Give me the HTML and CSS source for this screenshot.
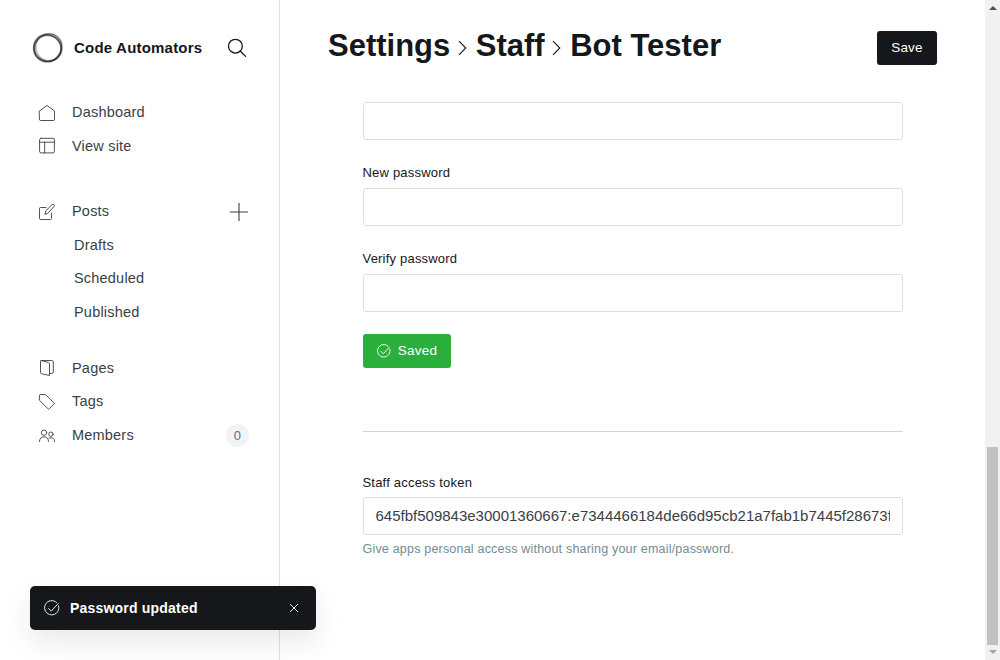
FILE: index.html
```html
<!DOCTYPE html>
<html lang="en">
<head>
<meta charset="utf-8">
<title>Settings - Staff - Bot Tester</title>
<link rel="stylesheet" href="styles.css">
</head>
<body>
<div class="app">
  <nav class="sidebar">
    <header class="site">
      <svg class="logo" viewBox="0 0 32 32"><g fill="none" stroke="#15171a"><ellipse cx="15.400" cy="16.400" rx="13.800" ry="13.400" stroke-width="1.500" opacity=".5"/><ellipse cx="16.3" cy="15.8" rx="14.5" ry="12.800" stroke-width=".9" opacity=".5" transform="rotate(-50 16 16)"/><ellipse cx="15.6" cy="16" rx="14.2" ry="13" stroke-width="1.4" opacity=".4" transform="rotate(35 16 16)"/><ellipse cx="17" cy="15.300" rx="13.300" ry="13.600" stroke-width="1.700" opacity=".3"/><ellipse cx="15.300" cy="16.600" rx="13.400" ry="13" stroke-width="1.4" opacity=".35"/></g></svg>
      <strong class="site-name">Code Automators</strong>
      <svg class="search" viewBox="0 0 20 20"><g fill="none" stroke="#15171a" stroke-width="1.3" stroke-linecap="round"><circle cx="8.4" cy="8.2" r="6.9"/><path d="M13.4 13.2l5.2 5.2"/></g></svg>
    </header>
    <ul class="menu">
      <li><svg class="icon" viewBox="0 0 18 18"><path d="M1.5 7L9 1.4 16.500 7V15.500Q16.500 16.500 15.500 16.500H2.500Q1.500 16.500 1.500 15.500Z"/></svg><span>Dashboard</span></li>
      <li><svg class="icon soft" viewBox="0 0 18 18"><rect x="1.600" y="1.300" width="14.800" height="14.600" rx="1.500"/><path d="M1.500 5.200h15M6.700 5.200V16"/></svg><span>View site</span></li>
    </ul>
    <ul class="menu posts">
      <li><svg class="icon" viewBox="0 0 18 18"><path d="M8 4.500H2.500Q1.500 4.500 1.500 5.500V15.500Q1.500 16.500 2.500 16.500H12.500Q13.500 16.500 13.500 15.500V10M7 11l.8-3.100 6.300-6.200q1-.8 1.900 0 .9 1 0 1.900L10 10.100Z"/></svg><span>Posts</span><svg class="plus" viewBox="0 0 18 18"><path d="M9 0v18M0 9h18"/></svg></li>
      <li class="sub">Drafts</li>
      <li class="sub">Scheduled</li>
      <li class="sub">Published</li>
    </ul>
    <ul class="menu pages">
      <li><svg class="icon high" viewBox="0 0 18 18"><path d="M3 1.500L10.600 3.500Q11.500 3.800 11.500 4.800V16.500L3.400 14.700Q2.500 14.400 2.500 13.500V2.500Q2.500 1.500 3.500 1.500H13.700Q15.300 1.500 15.300 3V13Q15.300 14.400 13.800 14.400H11.500"/></svg><span>Pages</span></li>
      <li><svg class="icon" viewBox="0 0 18 18"><path d="M1.500 2.500Q1.500 1.500 2.500 1.500H7.500L16.500 10.400 10.700 16.400 1.500 7.300Z"/></svg><span>Tags</span></li>
      <li><svg class="icon high" viewBox="0 0 18 18"><circle cx="6" cy="6.700" r="2.700"/><circle cx="12.900" cy="8.200" r="2.200"/><path d="M1.400 15.500Q1.800 10.900 6 10.900T10.600 15.500M10.900 12.100Q16.300 10.400 16.700 15.500"/></svg><span>Members</span><b class="badge">0</b></li>
    </ul>
  </nav>
  <main class="main">
    <header class="bar">
      <h1><span>Settings</span><svg class="chev" viewBox="0 0 10 18"><path d="M1 2.100L7.800 9 1 15.900"/></svg><span>Staff</span><svg class="chev" viewBox="0 0 10 18"><path d="M1 2.100L7.800 9 1 15.900"/></svg><span>Bot Tester</span></h1>
      <button class="btn save">Save</button>
    </header>
    <form class="form">
      <input type="password" aria-label="Old password">
      <label class="field"><span>New password</span><input type="password"></label>
      <label class="field"><span>Verify password</span><input type="password"></label>
      <button type="button" class="btn saved"><svg viewBox="0 0 18 18"><path d="M16.300 6.200A8 8 0 1 1 14.500 3.200M4.800 9.200L8.100 12.500 16.300 3.700"/></svg>Saved</button>
      <hr>
      <label class="token"><span>Staff access token</span><input type="text" readonly value="645fbf509843e30001360667:e7344466184de66d95cb21a7fab1b7445f28673ffe8ab4"></label>
      <p class="hint">Give apps personal access without sharing your email/password.</p>
    </form>
  </main>
  <div class="scrollbar"><i class="up"></i><i class="thumb"></i><i class="down"></i></div>
</div>
<aside class="toast">
  <svg class="ok" viewBox="0 0 18 18"><path d="M16.300 6.200A8 8 0 1 1 14.500 3.200M4.800 9.200L8.100 12.500 16.300 3.700"/></svg>
  <span>Password updated</span>
  <svg class="close" viewBox="0 0 10 10"><path d="M1 1l8 8M9 1l-8 8"/></svg>
</aside>
</body>
</html>
```
FILE: styles.css
```css
* { box-sizing: border-box; }
body { margin: 0; font-family: "Liberation Sans", Arial, sans-serif; letter-spacing: .2px; color: #15171a; background: #fff; overflow: hidden; }
svg { display: block; flex: none; overflow: visible; }
.app { display: flex; height: 660px; }
.sidebar { width: 280px; flex: none; border-right: 1px solid #e1e1e1; padding: 32px 30px 0 32px; }
.site { display: flex; align-items: center; height: 32px; }
.logo { width: 32px; height: 32px; }
.site-name { font-size: 15px; margin-left: 10px; flex: 1; white-space: nowrap; padding-bottom: 1px; }
.search { width: 20px; height: 20px; margin-right: 2px; }
.menu { list-style: none; margin: 31.3px 0 0; padding: 0; font-size: 14.5px; color: #394047; }
.menu li { display: flex; align-items: center; height: 33.5px; padding-left: 6px; }
.menu li.sub { padding-left: 42px; }
.menu.posts { margin-top: 32px; }
.menu.pages { margin-top: 22.5px; }
.icon { width: 18px; height: 18px; margin-right: 16px; position: relative; top: 1px; fill: none; stroke: #394047; stroke-width: .9; stroke-linejoin: round; stroke-linecap: round; }
.icon.soft { top: .7px; }
.icon.high { top: .5px; }
.plus { width: 18px; height: 18px; margin: 2px 1px 0 auto; stroke: #394047; stroke-width: 1.1; }
.badge { margin-left: auto; margin-top: 1px; width: 23px; height: 23px; border-radius: 12px; background: #f1f3f4; font-size: 13px; line-height: 23px; font-weight: 400; text-align: center; color: #626d79; }
.main { flex: 1; padding: 0 48px; }
.bar { display: flex; justify-content: space-between; align-items: center; height: 96px; }
h1 { display: flex; align-items: center; margin: -5px 0 0; font-size: 31px; line-height: 38px; letter-spacing: 0; white-space: nowrap; }
.chev { width: 10px; height: 18px; margin: 5px 8px 0 7.5px; fill: none; stroke: #15171a; stroke-width: 1.1; }
.btn { display: flex; align-items: center; justify-content: center; border: 0; border-radius: 3px; height: 34px; padding: 0 0 1px; font: 13.5px "Liberation Sans", sans-serif; letter-spacing: .2px; color: #fff; }
.save { width: 60px; background: #15171a; }
.form { width: 540px; margin: 6px 0 0 34.5px; }
input { display: block; width: 100%; height: 38px; padding: 0 12px 1px; border: 1px solid #dddedf; border-radius: 3px; background: #fff; font: 15px "Liberation Sans", sans-serif; color: #394047; outline: 0; }
.field { display: block; margin-top: 22px; }
.field span, .token span { display: block; font-size: 13px; line-height: 22px; margin-bottom: 4px; }
.saved { margin-top: 22px; width: 88px; background: #2ab03a; padding-left: 1px; }
.saved svg { width: 14px; height: 14px; margin: 1px 7px 0 0; stroke: #fff; stroke-width: 1.2; fill: none; }
hr { border: 0; border-top: 1px solid #ced4d9; margin: 63px 0 40px; }
.token { display: block; }
.token span { margin-bottom: 3px; }
.hint { margin: 5px 0 0; font-size: 12.5px; line-height: 18px; color: #738a94; }
.scrollbar { width: 15px; height: 660px; background: #f1f1f1; display: flex; flex-direction: column; align-items: center; }
.up { border: 4px solid transparent; border-top: 0; border-bottom-color: #505050; margin-top: 6px; }
.thumb { width: 11px; height: 198px; margin-top: 437px; background: #c1c1c1; }
.down { border: 4px solid transparent; border-bottom: 0; border-top-color: #a3a3a3; margin-top: 5px; }
.toast { position: absolute; left: 30px; top: 586px; width: 286px; height: 44px; border-radius: 5px; background: #15171a; color: #fff; display: flex; align-items: center; padding: 0 17px 0 14px; font-size: 14px; font-weight: 700; box-shadow: 0 0 1px rgba(0,0,0,.05), 0 12px 30px rgba(0,0,0,.09); }
.toast svg { fill: none; stroke: #fff; }
.ok { width: 16px; height: 16px; margin-right: 10px; stroke-width: 1; }
.close { width: 10px; height: 10px; margin-left: auto; stroke-width: .9; }
```
